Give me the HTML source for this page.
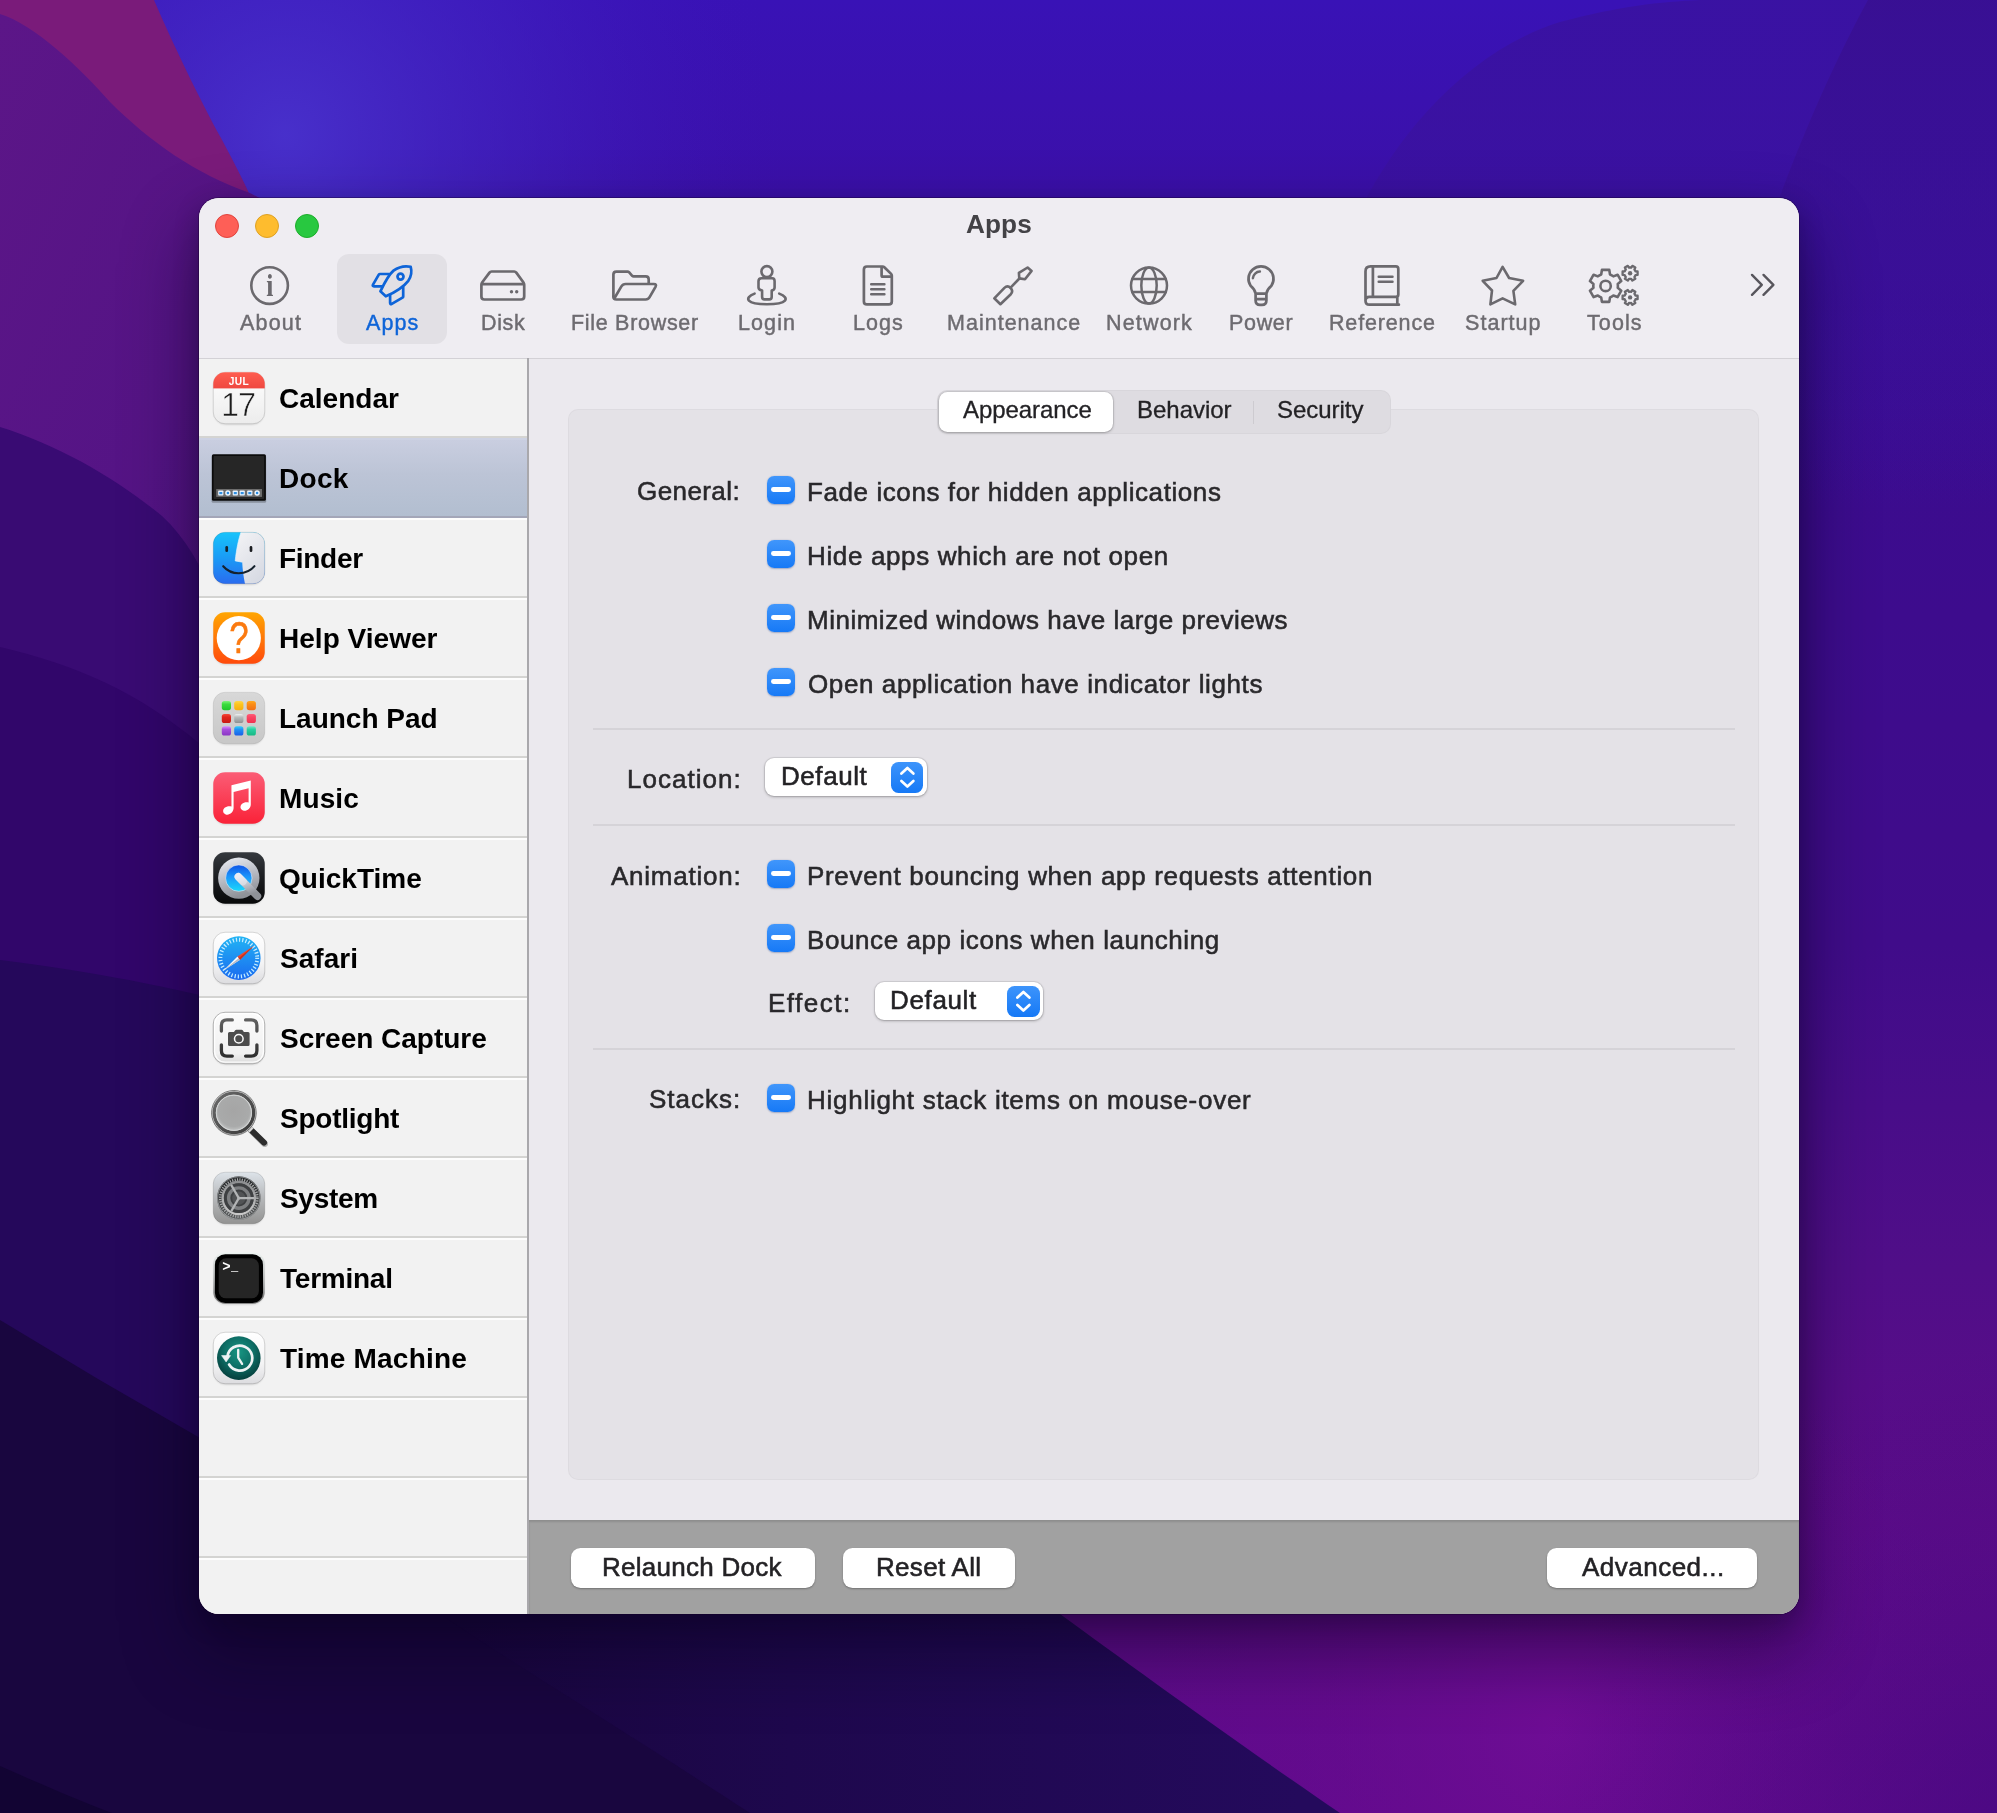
<!DOCTYPE html>
<html lang="en">
<head>
<meta charset="utf-8">
<title>Apps</title>
<style>
html,body{margin:0;padding:0}
body{width:1997px;height:1813px;position:relative;overflow:hidden;background:#2c0a66;font-family:"Liberation Sans",sans-serif;color:#262628}
#wall{position:absolute;left:0;top:0;width:1997px;height:1813px;display:block}
#win{position:absolute;left:199px;top:198px;width:1600px;height:1416px;border-radius:20px;overflow:hidden;background:#ebe9ee;box-shadow:0 0 0 1px rgba(20,0,40,.35),0 36px 70px 6px rgba(8,0,24,.42),0 8px 24px rgba(8,0,24,.25)}
.abs{position:absolute}
.t{position:absolute;white-space:nowrap;line-height:1;will-change:transform}
#tb{left:0;top:0;width:1600px;height:160px;background:#efedf2;border-bottom:1px solid #d3d1d6}
.tl{position:absolute;top:16px;width:24px;height:24px;border-radius:50%;box-sizing:border-box}
#tsel{left:138px;top:56px;width:110px;height:90px;background:#e2e0e5;border-radius:12px}
#side{left:0;top:161px;width:328px;height:1255px;background:#f2f2f2;overflow:hidden}
#sdiv{left:328px;top:160px;width:2px;height:1256px;background:#a9a8ac}
.row{position:absolute;left:0;width:328px;height:76px;border-top:2px solid #fdfdfd;border-bottom:2px solid #d4d4d2}
.row.first{border-top-color:transparent}
.row.sel{background:linear-gradient(#c9cee0,#bcc4d6 45%,#b2bed0);border-top-color:#cdd2e3;border-bottom-color:#a3a6b8}
#box{left:370px;top:212px;width:1189px;height:1069px;background:#e4e2e7;border-radius:9px;box-shadow:0 0 0 1px #dddbe0}
#seg{left:739px;top:192.5px;width:451.6px;height:42.5px;background:#dedce1;border-radius:9px;box-shadow:0 0 0 1px #d8d6db}
#seg .on{position:absolute;left:1px;top:1.5px;width:174px;height:39.5px;background:#fff;border-radius:8.5px;box-shadow:0 0 0 1px rgba(0,0,0,.07),0 1px 3px rgba(0,0,0,.25)}
#seg i{position:absolute;left:314.6px;top:10px;width:1.6px;height:23px;background:#cdcbd0}
.cb{position:absolute;left:567.8px;width:28.3px;height:28px;border-radius:7.2px;background:linear-gradient(#4096fb,#1679f6);box-shadow:0 .5px 1.5px rgba(0,40,120,.3)}

.cb:after{content:"";position:absolute;left:4.3px;top:11.4px;width:19.7px;height:5px;border-radius:2.4px;background:#fff}
.hr{position:absolute;left:394px;width:1142px;height:2px;background:#d5d3d8}
.pop{position:absolute;height:38.6px;background:#fff;border-radius:9px;box-shadow:0 0 0 1px rgba(0,0,0,.07),0 1px 3px rgba(0,0,0,.28)}
.pop em{position:absolute;right:3.6px;top:3.8px;width:32.4px;height:31px;border-radius:7.5px;background:linear-gradient(#3d94fb,#1679f6)}
.pop em svg{position:absolute;left:0;top:0;width:32.4px;height:31px}
#bar{left:330px;top:1322px;width:1270px;height:94px;background:#a1a1a1;box-shadow:inset 0 2px 2px rgba(0,0,0,.12)}
.btn{position:absolute;top:27.8px;height:40px;background:#fff;border-radius:9.5px;box-shadow:0 1px 2px rgba(0,0,0,.3)}

</style>
</head>
<body>
<svg id="wall" viewBox="0 0 1997 1813" width="1997" height="1813">
<defs>
<linearGradient id="gBase" x1="0" y1="0" x2="0" y2="1">
<stop offset="0" stop-color="#3912b6"/><stop offset=".11" stop-color="#3b10a8"/><stop offset=".28" stop-color="#3c0c8e"/><stop offset=".52" stop-color="#400c8a"/><stop offset=".70" stop-color="#500e88"/><stop offset=".84" stop-color="#5d0c89"/><stop offset="1" stop-color="#600a8c"/>
</linearGradient>
<radialGradient id="gBlue" cx="285" cy="135" r="500" gradientUnits="userSpaceOnUse">
<stop offset="0" stop-color="#4a35d0" stop-opacity=".85"/><stop offset=".5" stop-color="#4226c4" stop-opacity=".45"/><stop offset="1" stop-color="#3a12b6" stop-opacity="0"/>
</radialGradient>
<linearGradient id="gPur" x1="0" y1="0" x2="1" y2="1"><stop offset="0" stop-color="#5c1688"/><stop offset="1" stop-color="#4d1282"/></linearGradient>
<linearGradient id="gMid" x1="450" y1="0" x2="1300" y2="0" gradientUnits="userSpaceOnUse"><stop offset="0" stop-color="#19063f"/><stop offset=".4" stop-color="#1e084d"/><stop offset="1" stop-color="#240a5c"/></linearGradient>
<radialGradient id="gMag" cx="1560" cy="1730" r="420" gradientUnits="userSpaceOnUse"><stop offset="0" stop-color="#700d96" stop-opacity=".9"/><stop offset="1" stop-color="#640a8c" stop-opacity="0"/></radialGradient>
<linearGradient id="gShL" x1="0" y1="0" x2="1" y2="0"><stop offset="0" stop-color="#0a0020" stop-opacity="0"/><stop offset="1" stop-color="#0a0020" stop-opacity=".28"/></linearGradient>
<linearGradient id="gRA" x1="0" y1="0" x2="0" y2="520" gradientUnits="userSpaceOnUse"><stop offset="0" stop-color="#3a129c" stop-opacity=".75"/><stop offset=".4" stop-color="#3a129c" stop-opacity=".6"/><stop offset="1" stop-color="#3a0e92" stop-opacity="0"/></linearGradient>
<linearGradient id="gRB" x1="0" y1="0" x2="0" y2="560" gradientUnits="userSpaceOnUse"><stop offset="0" stop-color="#380f90" stop-opacity=".8"/><stop offset=".4" stop-color="#380f90" stop-opacity=".6"/><stop offset="1" stop-color="#3a0c8e" stop-opacity="0"/></linearGradient>
<radialGradient id="gBR" cx="2080" cy="1900" r="560" gradientUnits="userSpaceOnUse"><stop offset="0" stop-color="#36087a" stop-opacity=".6"/><stop offset=".45" stop-color="#36087a" stop-opacity=".3"/><stop offset="1" stop-color="#36087a" stop-opacity="0"/></radialGradient>
</defs>
<rect width="1997" height="1813" fill="url(#gBase)"/>
<rect width="1300" height="420" fill="url(#gBlue)"/>
<path d="M1360,210 C1400,130 1470,50 1560,22 C1620,6 1660,2 1700,0 L1997,0 L1997,700 L1360,700 Z" fill="url(#gRA)"/>
<path d="M1775,210 C1800,140 1835,60 1868,0 L1997,0 L1997,700 L1775,700 Z" fill="url(#gRB)"/>
<path d="M1997,1100 L1997,1813 L1340,1813 C1250,1750 1130,1665 1060,1614 L1000,1570 L1800,1200 Z" fill="url(#gMag)"/>
<rect x="1400" y="1200" width="597" height="613" fill="url(#gBR)"/>
<path d="M0,1400 L1000,1570 L1060,1614 C1130,1665 1250,1752 1340,1813 L0,1813 Z" fill="url(#gMid)"/>
<path d="M0,0 L154,0 C172,42 200,100 221,138 C236,166 246,186 252,200 L300,300 L0,300 Z" fill="#7a1b7a"/>
<path d="M0,14 C34,24 80,68 110,102 C150,142 196,174 250,193 L340,240 L340,760 L0,760 Z" fill="url(#gPur)"/>
<path d="M0,427 C58,445 116,478 162,516 C186,538 202,568 216,600 L340,760 L340,1050 L0,1050 Z" fill="#390b73"/>
<path d="M0,647 C77,665 138,692 200,744 L340,860 L340,1250 L0,1250 Z" fill="#31066a"/>
<path d="M0,960 C96,972 150,984 200,995 L340,1032 L340,1560 L0,1560 Z" fill="#25085b"/>
<path d="M0,1320 L98,1379 L200,1438 L440,1614 C520,1668 610,1722 750,1813 L0,1813 Z" fill="#19063f"/>
<path d="M0,1766 C40,1784 78,1800 112,1813 L0,1813 Z" fill="#120433"/>
</svg>

<div id="win">
<div id="tb" class="abs"></div>
<div class="tl" style="left:16px;background:#fe5f57;border:1px solid #e0443e"></div>
<div class="tl" style="left:56px;background:#febc2e;border:1px solid #dea123"></div>
<div class="tl" style="left:96px;background:#28c840;border:1px solid #1dad2b"></div>
<div id="tsel" class="abs"></div>
<svg class="abs" style="left:0;top:0;will-change:transform" width="1600" height="160" viewBox="199 198 1600 160"><circle cx="269.6" cy="285.6" r="18.3" fill="none" stroke="#6b696e" stroke-width="2.6"/><text transform="translate(269.75,295.55) scale(.8,1)" x="0" y="0" text-anchor="middle" font-family="Liberation Serif, serif" font-weight="bold" font-size="32" fill="#6b696e">i</text><path d="M410.7,266.8 C404.5,265.4 398,267.4 393.5,270.6 C389,274.4 385.4,280.8 380.4,291.3 L385.8,296.3 C398,291 404.5,285.6 408.3,280.8 C411.2,276.4 411.9,271 410.7,266.8 Z" fill="none" stroke="#0e64d8" stroke-width="2.7" stroke-linecap="round" stroke-linejoin="round" /><path d="M389,274 L380,274 Q379.2,274 378.8,274.7 L373,284.6 Q372.2,286.3 374,286.3 L382.4,286.3" fill="none" stroke="#0e64d8" stroke-width="2.7" stroke-linecap="round" stroke-linejoin="round" /><path d="M390.1,295 L390.1,302.8 Q390.1,304.8 391.8,303.8 L402.5,297.6 Q403.2,297.2 403.2,296.4 L403.2,287" fill="none" stroke="#0e64d8" stroke-width="2.7" stroke-linecap="round" stroke-linejoin="round" /><circle cx="400.5" cy="276.6" r="3" fill="none" stroke="#0e64d8" stroke-width="2.7"/><path d="M491.6,271.5 H514.2 Q515.5,271.5 516.3,272.6 L523.5,282.5 Q524.2,283.5 524.2,284.8 V296.5 Q524.2,299.5 521.2,299.5 H484.4 Q481.4,299.5 481.4,296.5 V284.8 Q481.4,283.5 482.1,282.5 L489.5,272.6 Q490.3,271.5 491.6,271.5 Z M481.8,284.1 H523.8" fill="none" stroke="#6b696e" stroke-width="2.7" stroke-linecap="round" stroke-linejoin="round" /><circle cx="511.5" cy="291.8" r="1.7" fill="#6b696e"/><circle cx="516.7" cy="291.8" r="1.7" fill="#6b696e"/><path d="M613.4,296.5 V274.6 Q613.4,271.6 616.4,271.6 H627.6 Q628.4,271.6 629,272.2 L632.2,275.8 Q632.8,276.4 633.6,276.4 H645.7 Q648.7,276.4 648.7,279.4 V283.6" fill="none" stroke="#6b696e" stroke-width="2.7" stroke-linecap="round" stroke-linejoin="round" /><path d="M614.4,298.2 L621.4,286.4 Q622.8,284 625.6,284 H653.8 Q657,284 655.5,286.8 L649.6,297.2 Q648.3,299.5 645.6,299.5 H616.4 Q613.4,299.5 613.4,296.5" fill="none" stroke="#6b696e" stroke-width="2.7" stroke-linecap="round" stroke-linejoin="round" /><circle cx="766.9" cy="271.6" r="5.5" fill="none" stroke="#6b696e" stroke-width="2.6"/><path d="M761.5,278.2 H772.3 Q774.6,278.2 774.6,281.2 V287.4 Q774.6,289.6 771.7,290.6 V297 Q771.7,299.4 769.3,299.4 H764.5 Q762.1,299.4 762.1,297 V290.6 Q758.5,289.6 758.5,287.4 V281.2 Q758.5,278.2 761.5,278.2 Z" fill="none" stroke="#6b696e" stroke-width="2.6" stroke-linecap="round" stroke-linejoin="round" /><path d="M754.6,293.6 C743.5,298 746.5,304.2 766.9,304.2 C787.5,304.2 790.3,298 779.2,293.6" fill="none" stroke="#6b696e" stroke-width="2.6" stroke-linecap="round" stroke-linejoin="round" /><path d="M866.9,266.5 H882.6 Q883.6,266.5 884.3,267.2 L891.1,273.9 Q891.8,274.6 891.8,275.6 V301.4 Q891.8,304.4 888.8,304.4 H866.9 Q863.9,304.4 863.9,301.4 V269.5 Q863.9,266.5 866.9,266.5 Z M881.6,266.8 V275.4 Q881.6,276.6 882.8,276.6 H891.5" fill="none" stroke="#6b696e" stroke-width="2.7" stroke-linecap="round" stroke-linejoin="round" /><path d="M871.2,284.3 H884.4 M871.2,289.3 H884.4 M871.2,294.3 H884.4" fill="none" stroke="#6b696e" stroke-width="2.5" stroke-linecap="round" stroke-linejoin="round" /><path d="M994.3,298.3 L1004.4,287.9 Q1007.6,285 1010.6,288 Q1013.6,291 1010.8,294.2 L1000.4,304.2 Z" fill="none" stroke="#6b696e" stroke-width="2.6" stroke-linecap="round" stroke-linejoin="round" /><path d="M1010.6,287.6 L1019.4,278.5" fill="none" stroke="#6b696e" stroke-width="2.6" stroke-linecap="round" stroke-linejoin="round" /><path d="M1019.3,278.4 L1018.9,272.9 L1027.6,267.5 L1031.6,270.9 L1025,279.2 Z" fill="none" stroke="#6b696e" stroke-width="2.6" stroke-linecap="round" stroke-linejoin="round" /><circle cx="1149" cy="285.6" r="18" fill="none" stroke="#6b696e" stroke-width="2.5"/><ellipse cx="1149" cy="285.6" rx="7.7" ry="18" fill="none" stroke="#6b696e" stroke-width="2.5"/><path d="M1132.3,279 H1165.7 M1132.2,292 H1165.8" fill="none" stroke="#6b696e" stroke-width="2.5" stroke-linecap="round" stroke-linejoin="round" /><path d="M1255.6,293.6 C1255,289.6 1252,287 1250.6,285.8 A12.5,12.5 0 1 1 1271.4,285.8 C1270,287 1267,289.6 1266.4,293.6 Z M1255.6,293.6 V300.5 Q1255.6,304.9 1260,304.9 H1262 Q1266.4,304.9 1266.4,300.5 V293.6 M1255.8,299.1 H1266.2" fill="none" stroke="#6b696e" stroke-width="2.7" stroke-linecap="round" stroke-linejoin="round" /><path d="M1252.9,278.2 A7.2,7.2 0 0 1 1259.9,271.6" fill="none" stroke="#6b696e" stroke-width="2.5" stroke-linecap="round" stroke-linejoin="round" /><path d="M1365.5,300.8 V271.4 Q1365.5,266.4 1370.5,266.4 H1395.8 Q1398.3,266.4 1398.3,268.9 V294.4 Q1398.3,296.9 1395.8,296.9 H1369.4 Q1365.5,296.9 1365.5,300.8 Q1365.5,304.7 1369.4,304.7 H1398.9 M1397.3,297.2 V304.4 M1372.9,266.8 V296.6" fill="none" stroke="#6b696e" stroke-width="2.7" stroke-linecap="round" stroke-linejoin="round" /><path d="M1378.7,276.8 H1392.5 M1378.7,281.7 H1392.5" fill="none" stroke="#6b696e" stroke-width="2.5" stroke-linecap="round" stroke-linejoin="round" /><path d="M1502.6,266.8 L1509.1,278 L1523.1,280.8 L1513.4,290.8 L1515.2,304.4 L1502.6,298.3 L1490.4,304.4 L1492,290.5 L1482.7,280.8 L1496.5,278 Z" fill="none" stroke="#6b696e" stroke-width="2.6" stroke-linecap="round" stroke-linejoin="round" /><path d="M1610.01,274.42 L1609.29,269.92 L1601.91,269.92 L1601.19,274.42 A12.3,12.3 0 0 0 1597.86,276.34 L1593.61,274.72 L1589.92,281.11 L1593.45,283.98 A12.3,12.3 0 0 0 1593.45,287.82 L1589.92,290.69 L1593.61,297.08 L1597.86,295.46 A12.3,12.3 0 0 0 1601.19,297.38 L1601.91,301.88 L1609.29,301.88 L1610.01,297.38 A12.3,12.3 0 0 0 1613.34,295.46 L1617.59,297.08 L1621.28,290.69 L1617.75,287.82 A12.3,12.3 0 0 0 1617.75,283.98 L1621.28,281.11 L1617.59,274.72 L1613.34,276.34 A12.3,12.3 0 0 0 1610.01,274.42 Z" fill="none" stroke="#6b696e" stroke-width="2.6" stroke-linecap="round" stroke-linejoin="round" /><circle cx="1605.6" cy="285.9" r="5.2" fill="none" stroke="#6b696e" stroke-width="2.6"/><path d="M1634.40,269.46 L1635.35,267.57 L1632.35,265.84 L1631.19,267.60 A5.7,5.7 0 0 0 1629.01,267.60 L1627.85,265.84 L1624.85,267.57 L1625.80,269.46 A5.7,5.7 0 0 0 1624.71,271.34 L1622.60,271.47 L1622.60,274.93 L1624.71,275.06 A5.7,5.7 0 0 0 1625.80,276.94 L1624.85,278.83 L1627.85,280.56 L1629.01,278.80 A5.7,5.7 0 0 0 1631.19,278.80 L1632.35,280.56 L1635.35,278.83 L1634.40,276.94 A5.7,5.7 0 0 0 1635.49,275.06 L1637.60,274.93 L1637.60,271.47 L1635.49,271.34 A5.7,5.7 0 0 0 1634.40,269.46 Z" fill="none" stroke="#6b696e" stroke-width="2.3" stroke-linecap="round" stroke-linejoin="round" /><path d="M1634.40,293.66 L1635.35,291.77 L1632.35,290.04 L1631.19,291.80 A5.7,5.7 0 0 0 1629.01,291.80 L1627.85,290.04 L1624.85,291.77 L1625.80,293.66 A5.7,5.7 0 0 0 1624.71,295.54 L1622.60,295.67 L1622.60,299.13 L1624.71,299.26 A5.7,5.7 0 0 0 1625.80,301.14 L1624.85,303.03 L1627.85,304.76 L1629.01,303.00 A5.7,5.7 0 0 0 1631.19,303.00 L1632.35,304.76 L1635.35,303.03 L1634.40,301.14 A5.7,5.7 0 0 0 1635.49,299.26 L1637.60,299.13 L1637.60,295.67 L1635.49,295.54 A5.7,5.7 0 0 0 1634.40,293.66 Z" fill="none" stroke="#6b696e" stroke-width="2.3" stroke-linecap="round" stroke-linejoin="round" /><circle cx="1630.1" cy="273.2" r="2.2" fill="#6b696e"/><circle cx="1630.1" cy="297.4" r="2.2" fill="#6b696e"/><path d="M1752,274.9 L1761.8,284.85 L1752,294.8 M1763.5,274.9 L1773.4,284.85 L1763.5,294.8" fill="none" stroke="#57555c" stroke-width="2.4" stroke-linecap="round" stroke-linejoin="round" /></svg>
<div id="side" class="abs">
<div class="row first" style="top:-1px"></div>
<div class="row sel" style="top:79px"></div>
<div class="row" style="top:159px"></div>
<div class="row" style="top:239px"></div>
<div class="row" style="top:319px"></div>
<div class="row" style="top:399px"></div>
<div class="row" style="top:479px"></div>
<div class="row" style="top:559px"></div>
<div class="row" style="top:639px"></div>
<div class="row" style="top:719px"></div>
<div class="row" style="top:799px"></div>
<div class="row" style="top:879px"></div>
<div class="row" style="top:959px"></div>
<div class="row" style="top:1039px"></div>
<div class="row" style="top:1119px"></div>
<div class="row" style="top:1199px"></div>
</div>
<div id="sdiv" class="abs"></div>
<svg class="abs" style="left:0;top:160px;will-change:transform" width="330" height="1256" viewBox="199 358 330 1256"><defs>
<filter id="ib" x="-20%" y="-20%" width="140%" height="140%"><feGaussianBlur stdDeviation="1"/></filter>
<filter id="ib2" x="-20%" y="-20%" width="140%" height="140%"><feGaussianBlur stdDeviation=".45"/></filter>
<linearGradient id="calR" x1="0" y1="0" x2="0" y2="1"><stop offset="0" stop-color="#ff5e50"/><stop offset="1" stop-color="#ef4840"/></linearGradient>
<linearGradient id="calW" x1="0" y1="0" x2="0" y2="1"><stop offset="0" stop-color="#ffffff"/><stop offset="1" stop-color="#ececec"/></linearGradient>
<clipPath id="sqc"><rect x=".25" y=".25" width="51.5" height="51.5" rx="11.8"/></clipPath>
<linearGradient id="finB" x1="0" y1="0" x2="0" y2="1"><stop offset="0" stop-color="#17c4fb"/><stop offset=".5" stop-color="#1a9bf6"/><stop offset="1" stop-color="#2a6bee"/></linearGradient>
<linearGradient id="finW" x1="0" y1="0" x2=".6" y2="1"><stop offset="0" stop-color="#f4f4f6"/><stop offset="1" stop-color="#d8dbe4"/></linearGradient>
<linearGradient id="helpO" x1="0" y1="0" x2="0" y2="1"><stop offset="0" stop-color="#ffa602"/><stop offset="1" stop-color="#ff4a0c"/></linearGradient>
<linearGradient id="lpG" x1="0" y1="0" x2="0" y2="1"><stop offset="0" stop-color="#d8d8d8"/><stop offset="1" stop-color="#c7c7c7"/></linearGradient>
<linearGradient id="musR" x1="0" y1="0" x2="0" y2="1"><stop offset="0" stop-color="#fb5d76"/><stop offset="1" stop-color="#fa2238"/></linearGradient>
<linearGradient id="qtK" x1="0" y1="0" x2="0" y2="1"><stop offset="0" stop-color="#35393e"/><stop offset=".5" stop-color="#1b1d20"/><stop offset="1" stop-color="#08090a"/></linearGradient>
<linearGradient id="qtS" x1="0" y1="0" x2=".3" y2="1"><stop offset="0" stop-color="#eef1f7"/><stop offset=".55" stop-color="#b9bcc4"/><stop offset="1" stop-color="#8f9298"/></linearGradient>
<linearGradient id="qtB" x1="0" y1="0" x2="0" y2="1"><stop offset="0" stop-color="#0f55e6"/><stop offset=".45" stop-color="#1b96fb"/><stop offset="1" stop-color="#1ad9fa"/></linearGradient>
<linearGradient id="safW" x1="0" y1="0" x2="0" y2="1"><stop offset="0" stop-color="#ffffff"/><stop offset=".6" stop-color="#f4f4f5"/><stop offset="1" stop-color="#dcdcdf"/></linearGradient>
<linearGradient id="safB" x1="0" y1="0" x2="0" y2="1"><stop offset="0" stop-color="#22b4f4"/><stop offset="1" stop-color="#1a6af0"/></linearGradient>
<linearGradient id="scW" x1="0" y1="0" x2="0" y2="1"><stop offset="0" stop-color="#fbfbfb"/><stop offset=".8" stop-color="#f1f1f1"/><stop offset="1" stop-color="#d9d9d9"/></linearGradient>
<linearGradient id="scK" x1="0" y1="0" x2="0" y2="1"><stop offset="0" stop-color="#606060"/><stop offset="1" stop-color="#2e2e2e"/></linearGradient>
<linearGradient id="sysG" x1="0" y1="0" x2="0" y2="1"><stop offset="0" stop-color="#dde3e9"/><stop offset=".5" stop-color="#b6b8ba"/><stop offset="1" stop-color="#939392"/></linearGradient>
<linearGradient id="sysD" x1="0" y1="0" x2="0" y2="1"><stop offset="0" stop-color="#1e2022"/><stop offset="1" stop-color="#5a5c5d"/></linearGradient>
<linearGradient id="sysM" x1="0" y1="0" x2="0" y2="1"><stop offset="0" stop-color="#8d8f91"/><stop offset="1" stop-color="#c9c9c9"/></linearGradient>
<linearGradient id="termR" x1="0" y1="0" x2="0" y2="1"><stop offset="0" stop-color="#eef4f2"/><stop offset=".5" stop-color="#b5b7b7"/><stop offset="1" stop-color="#6f6f6f"/></linearGradient>
<radialGradient id="tmT" cx=".5" cy=".36" r=".62"><stop offset="0" stop-color="#179582"/><stop offset=".55" stop-color="#0e6f66"/><stop offset="1" stop-color="#06423f"/></radialGradient>
<radialGradient id="spG" cx=".5" cy=".45" r=".55"><stop offset="0" stop-color="#a5a5a5"/><stop offset=".8" stop-color="#a9aaaa"/><stop offset="1" stop-color="#bfc1c1"/></radialGradient>
<linearGradient id="spR" x1="0" y1="0" x2="1" y2="1"><stop offset="0" stop-color="#6a6a6a"/><stop offset="1" stop-color="#3a3a3a"/></linearGradient>
</defs><g transform="translate(213,372)"><rect x="1" y="2.2" width="50" height="50.4" rx="12" fill="#000" opacity=".16" filter="url(#ib)"/><rect x="0.25" y="0.25" width="51.5" height="51.5" rx="11.8" fill="url(#calW)" stroke="#000" stroke-opacity=".22" stroke-width=".6"/><g clip-path="url(#sqc)"><rect x="0" y="0" width="52" height="16.4" fill="url(#calR)"/></g><text x="25.9" y="12.55" text-anchor="middle" font-family="Liberation Sans, sans-serif" font-weight="bold" font-size="10.2" fill="#fff" letter-spacing=".3">JUL</text><text x="24.9" y="43.5" text-anchor="middle" font-family="Liberation Sans, sans-serif" font-size="32.6" fill="#1c1c1c" stroke="#fafafa" stroke-width=".6" letter-spacing="-1.3">17</text></g><g transform="translate(213,452)"><rect x="-1.4" y="3.4" width="54.6" height="47.4" rx="1.6" fill="#000" opacity=".25" filter="url(#ib2)"/><rect x="-1.1" y="2.2" width="54" height="46.6" rx="1.6" fill="#0b0b0b"/><rect x="0.6" y="4" width="50.6" height="43" rx=".8" fill="#262626"/><rect x="3.2" y="37" width="45.8" height="7.9" fill="#6d6d6d"/><rect x="5.199999999999999" y="38.5" width="5.2" height="5" rx=".8" fill="#e6f3ff"/><rect x="6.3" y="40" width="3" height="2.2" fill="#2f8fe2"/><circle cx="14.9" cy="41" r="2.7" fill="#eaf6ff"/><circle cx="14.9" cy="41" r="1.3" fill="#2a8ae0"/><rect x="19.7" y="38.5" width="5.2" height="5" rx=".8" fill="#e6f3ff"/><rect x="20.8" y="40" width="3" height="2.2" fill="#2f8fe2"/><rect x="26.599999999999998" y="38.5" width="5.2" height="5" rx=".8" fill="#e6f3ff"/><rect x="27.7" y="40" width="3" height="2.2" fill="#2f8fe2"/><rect x="34.199999999999996" y="38.5" width="5.2" height="5" rx=".8" fill="#e6f3ff"/><rect x="35.3" y="40" width="3" height="2.2" fill="#2f8fe2"/><circle cx="44.1" cy="41" r="2.7" fill="#eaf6ff"/><circle cx="44.1" cy="41" r="1.3" fill="#2a8ae0"/></g><g transform="translate(213,532)"><rect x="1" y="2.2" width="50" height="50.4" rx="12" fill="#000" opacity=".16" filter="url(#ib)"/><g clip-path="url(#sqc)"><rect width="52" height="52" fill="url(#finB)"/><path d="M28,0 C25.6,7 23.4,17 22.2,28.9 L29.2,30.2 C29.6,38 30.6,45 32,52 L52,52 L52,0 Z" fill="url(#finW)"/><path d="M28,0 C25.6,7 23.4,17 22.2,28.9 L29.2,30.2" fill="none" stroke="#dff6ff" stroke-width=".7" opacity=".9"/></g><rect x="12.35" y="14.1" width="2.7" height="5.9" rx="1.3" fill="#16222e"/><rect x="36.65" y="14.1" width="2.7" height="5.9" rx="1.3" fill="#1a1c20"/><path d="M10.2,34.2 C14.5,39.2 19.8,41.2 25.7,41.2 C31.8,41.2 37.4,39.2 41.5,34.2" fill="none" stroke="#15222e" stroke-width="2.1" stroke-linecap="round"/><rect x="0.25" y="0.25" width="51.5" height="51.5" rx="11.8" fill="none" stroke="#000" stroke-opacity=".18" stroke-width=".6"/></g><g transform="translate(213,612)"><rect x="1" y="2.2" width="50" height="50.4" rx="12" fill="#000" opacity=".16" filter="url(#ib)"/><rect x="0.25" y="0.25" width="51.5" height="51.5" rx="11.8" fill="url(#helpO)" /><circle cx="25.8" cy="26.1" r="22.1" fill="#fff"/><text transform="translate(26,41.4) scale(.85,1.06)" x="0" y="0" text-anchor="middle" font-family="Liberation Sans, sans-serif" font-size="41" fill="#fb7a10" stroke="#fb7a10" stroke-width=".5">?</text></g><g transform="translate(213,692)"><rect x="1" y="2.2" width="50" height="50.4" rx="12" fill="#000" opacity=".16" filter="url(#ib)"/><defs><linearGradient id="lp00" x1="0" y1="0" x2="0" y2="1"><stop offset="0" stop-color="#7df37a"/><stop offset=".35" stop-color="#3bdc3e"/><stop offset="1" stop-color="#1fc62a"/></linearGradient><linearGradient id="lp01" x1="0" y1="0" x2="0" y2="1"><stop offset="0" stop-color="#ffd64a"/><stop offset=".35" stop-color="#fdc51f"/><stop offset="1" stop-color="#f6ae10"/></linearGradient><linearGradient id="lp02" x1="0" y1="0" x2="0" y2="1"><stop offset="0" stop-color="#ffaa20"/><stop offset=".35" stop-color="#fb8d15"/><stop offset="1" stop-color="#f07018"/></linearGradient><linearGradient id="lp10" x1="0" y1="0" x2="0" y2="1"><stop offset="0" stop-color="#f54a3a"/><stop offset=".35" stop-color="#e2241c"/><stop offset="1" stop-color="#c71a14"/></linearGradient><linearGradient id="lp11" x1="0" y1="0" x2="0" y2="1"><stop offset="0" stop-color="#f2f4f4"/><stop offset=".35" stop-color="#b9bcbd"/><stop offset="1" stop-color="#8c9091"/></linearGradient><linearGradient id="lp12" x1="0" y1="0" x2="0" y2="1"><stop offset="0" stop-color="#ff5f7a"/><stop offset=".35" stop-color="#fb4563"/><stop offset="1" stop-color="#f03050"/></linearGradient><linearGradient id="lp20" x1="0" y1="0" x2="0" y2="1"><stop offset="0" stop-color="#d68cff"/><stop offset=".35" stop-color="#a74edc"/><stop offset="1" stop-color="#8a36c4"/></linearGradient><linearGradient id="lp21" x1="0" y1="0" x2="0" y2="1"><stop offset="0" stop-color="#30d0fb"/><stop offset=".35" stop-color="#1f90f5"/><stop offset="1" stop-color="#1a5fe8"/></linearGradient><linearGradient id="lp22" x1="0" y1="0" x2="0" y2="1"><stop offset="0" stop-color="#6fe8c8"/><stop offset=".35" stop-color="#28d0a0"/><stop offset="1" stop-color="#18b884"/></linearGradient></defs><rect x="0.25" y="0.25" width="51.5" height="51.5" rx="11.8" fill="url(#lpG)" stroke="#000" stroke-opacity=".12" stroke-width=".6"/><rect x="8.8" y="9.0" width="9.2" height="9.2" rx="2.6" fill="url(#lp00)"/><rect x="21.200000000000003" y="9.0" width="9.2" height="9.2" rx="2.6" fill="url(#lp01)"/><rect x="33.699999999999996" y="9.0" width="9.2" height="9.2" rx="2.6" fill="url(#lp02)"/><rect x="8.8" y="21.9" width="9.2" height="9.2" rx="2.6" fill="url(#lp10)"/><rect x="21.200000000000003" y="21.9" width="9.2" height="9.2" rx="2.6" fill="url(#lp11)"/><rect x="33.699999999999996" y="21.9" width="9.2" height="9.2" rx="2.6" fill="url(#lp12)"/><rect x="8.8" y="34.3" width="9.2" height="9.2" rx="2.6" fill="url(#lp20)"/><rect x="21.200000000000003" y="34.3" width="9.2" height="9.2" rx="2.6" fill="url(#lp21)"/><rect x="33.699999999999996" y="34.3" width="9.2" height="9.2" rx="2.6" fill="url(#lp22)"/></g><g transform="translate(213,772)"><rect x="1" y="2.2" width="50" height="50.4" rx="12" fill="#000" opacity=".16" filter="url(#ib)"/><rect x="0.25" y="0.25" width="51.5" height="51.5" rx="11.8" fill="url(#musR)" /><path d="M18.45,13.2 L37.8,8.5 V32.4 C37.8,36.6 33.5,39.6 30.1,38.5 C27.2,37.5 26.6,34.2 28.9,32 C30.7,30.3 33.4,30.1 35.6,30.6 V16.3 L20.6,19.9 V36.1 C20.6,40.4 16.2,43.6 12.7,42.4 C9.8,41.4 9.3,38 11.6,35.8 C13.4,34.1 16.2,33.9 18.45,34.4 Z" fill="#fff"/></g><g transform="translate(213,852)"><rect x="1" y="2.2" width="50" height="50.4" rx="12" fill="#000" opacity=".16" filter="url(#ib)"/><rect x="0.25" y="0.25" width="51.5" height="51.5" rx="11.8" fill="url(#qtK)" /><circle cx="25.8" cy="26.1" r="20.7" fill="url(#qtS)"/><circle cx="25.8" cy="26.1" r="13.2" fill="url(#qtB)"/><circle cx="25.8" cy="26.1" r="13.2" fill="none" stroke="#dfe8f5" stroke-width=".8" opacity=".8"/><path d="M25.4,24.8 L44.4,44.2" stroke="url(#qtS)" stroke-width="7.6" stroke-linecap="round" fill="none"/><path d="M25.4,24.8 L30,29.5" stroke="#e8eaf0" stroke-width="7.6" stroke-linecap="round" fill="none" opacity=".55"/></g><g transform="translate(213,932)"><rect x="1" y="2.2" width="50" height="50.4" rx="12" fill="#000" opacity=".16" filter="url(#ib)"/><rect x="0.25" y="0.25" width="51.5" height="51.5" rx="11.8" fill="url(#safW)" stroke="#000" stroke-opacity=".25" stroke-width=".6"/><circle cx="25.8" cy="26.1" r="21.8" fill="url(#safB)"/><circle cx="25.8" cy="26.1" r="18.4" fill="none" stroke="#c4ecff" stroke-width="3.9" stroke-dasharray="1.25 1.9615" transform="rotate(-1 25.8 26.1)"/><path d="M10.5,38.4 L27.12,27.74 L24.48,24.46 Z" fill="#fdfdfd"/><path d="M10.5,38.4 L27.12,27.74 L25.8,26.1 Z" fill="#b9bcc6"/><path d="M40.7,14.1 L27.12,27.74 L24.48,24.46 Z" fill="#f0482e"/><path d="M40.7,14.1 L27.12,27.74 L25.8,26.1 Z" fill="#c8341e"/></g><g transform="translate(213,1012)"><rect x="1" y="2.2" width="50" height="50.4" rx="12" fill="#000" opacity=".16" filter="url(#ib)"/><rect x="0.25" y="0.25" width="51.5" height="51.5" rx="11.8" fill="url(#scW)" stroke="#a8a8a8" stroke-width=".9"/><rect x="1.6" y="1.6" width="48.8" height="48.6" rx="10.6" fill="none" stroke="#fff" stroke-width="1.2" opacity=".9"/><path d="M8.4,19 V13.4 Q8.4,7.9 13.9,7.9 H19.3 M32.6,7.9 H38.2 Q43.9,7.9 43.9,13.4 V19 M43.9,32.8 V38.5 Q43.9,44.1 38.2,44.1 H32.6 M19.3,44.1 H13.9 Q8.4,44.1 8.4,38.5 V32.8" fill="none" stroke="url(#scK)" stroke-width="3.3" stroke-linecap="round" stroke-linejoin="round"/><path d="M16.5,19.9 H21 L22.2,18.2 Q22.6,17.7 23.3,17.7 H28.6 Q29.3,17.7 29.7,18.2 L30.9,19.9 H35.1 Q36.6,19.9 36.6,21.4 V32.5 Q36.6,34 35.1,34 H16.5 Q15,34 15,32.5 V21.4 Q15,19.9 16.5,19.9 Z" fill="#4c4c4c"/><circle cx="25.8" cy="26.7" r="4.3" fill="#4c4c4c" stroke="#fafafa" stroke-width="1.5"/></g><g transform="translate(213,1092)"><path d="M37.6,37.5 L51.2,50.8" stroke="#000" stroke-opacity=".25" stroke-width="6.6" stroke-linecap="round" filter="url(#ib2)" transform="translate(.6,1)"/><path d="M36.4,36.3 L51,50.6" stroke="#2d2d2d" stroke-width="6" stroke-linecap="round"/><path d="M36.4,36.3 L38.6,38.4" stroke="#d9d9d9" stroke-width="6" stroke-linecap="butt"/><circle cx="20.9" cy="21.6" r="22.4" fill="#000" opacity=".22" filter="url(#ib2)"/><circle cx="20.9" cy="20.8" r="22.3" fill="#dcdcdc" stroke="#6b6b6b" stroke-width=".9"/><circle cx="20.9" cy="20.8" r="19.7" fill="none" stroke="url(#spR)" stroke-width="3.3"/><circle cx="20.9" cy="20.8" r="17.6" fill="url(#spG)" stroke="#d4d6d6" stroke-width=".9"/></g><g transform="translate(213,1172)"><rect x="1" y="2.2" width="50" height="50.4" rx="12" fill="#000" opacity=".16" filter="url(#ib)"/><rect x="0.25" y="0.25" width="51.5" height="51.5" rx="11.8" fill="url(#sysG)" stroke="#000" stroke-opacity=".2" stroke-width=".6"/><circle cx="25.8" cy="26.1" r="21.8" fill="url(#sysD)"/><circle cx="25.8" cy="26.1" r="21.2" fill="none" stroke="#cfd2d4" stroke-width=".7" opacity=".8"/><circle cx="25.8" cy="26.1" r="17.6" fill="#555759"/><circle cx="25.8" cy="26.1" r="18.6" fill="none" stroke="#a9abac" stroke-width="2.6" stroke-dasharray="1.15 1.285"/><circle cx="25.8" cy="26.1" r="16.1" fill="none" stroke="url(#sysM)" stroke-width="2.3"/><circle cx="25.8" cy="26.1" r="14.9" fill="#3e4042"/><circle cx="25.8" cy="26.1" r="10.2" fill="none" stroke="#7d7f81" stroke-width="3.4"/><circle cx="25.8" cy="26.1" r="6.6" fill="#515355"/><path d="M25.8,26.1 L41.10,26.10 M25.8,26.1 L18.15,12.85 M25.8,26.1 L18.15,39.35 " stroke="#b3b5b6" stroke-width="2.2" stroke-linecap="butt" fill="none"/><circle cx="25.8" cy="26.1" r="1.6" fill="#b3b5b6"/></g><g transform="translate(213,1252)"><rect x="1" y="2.2" width="50" height="50.4" rx="12" fill="#000" opacity=".16" filter="url(#ib)"/><rect x="0.25" y="0.25" width="51.5" height="51.5" rx="11.8" fill="url(#termR)" /><rect x="1.9" y="2.3" width="48.1" height="48.8" rx="10.4" fill="#000"/><rect x="5.7" y="6.3" width="40.2" height="40" rx="7.4" fill="#252525"/><text x="9.2" y="18.9" font-family="Liberation Mono, monospace" font-weight="bold" font-size="14" fill="#fff">&gt;</text><text x="18" y="17.6" font-family="Liberation Mono, monospace" font-weight="bold" font-size="15" fill="#fff" textLength="7.2" lengthAdjust="spacingAndGlyphs">_</text></g><g transform="translate(213,1332)"><rect x="1" y="2.2" width="50" height="50.4" rx="12" fill="#000" opacity=".16" filter="url(#ib)"/><rect x="0.25" y="0.25" width="51.5" height="51.5" rx="11.8" fill="url(#safW)" stroke="#000" stroke-opacity=".25" stroke-width=".6"/><circle cx="25.8" cy="26.1" r="21.8" fill="url(#tmT)"/><path d="M14.37,24.79 A12.5,12.5 0 1 1 16.09,32.54" fill="none" stroke="#eef3f4" stroke-width="2.7" stroke-linecap="round"/><path d="M8.6,23.6 L17.6,23.6 L13.1,29.9 Z" fill="#eef3f4" stroke="#eef3f4" stroke-width=".6" stroke-linejoin="round"/><path d="M25.2,17.8 V25.6 L29.1,31.9" fill="none" stroke="#eef3f4" stroke-width="2.3" stroke-linecap="round" stroke-linejoin="round"/></g></svg>
<div id="box" class="abs"></div>
<div id="seg" class="abs"><div class="on"></div><i></i></div>
<div class="cb" style="top:278px"></div>
<div class="cb" style="top:342px"></div>
<div class="cb" style="top:406px"></div>
<div class="cb" style="top:470px"></div>
<div class="cb" style="top:661.8px"></div>
<div class="cb" style="top:725.8px"></div>
<div class="cb" style="top:886px"></div>
<div class="hr" style="top:530px"></div>
<div class="hr" style="top:626px"></div>
<div class="hr" style="top:850px"></div>
<div class="pop" style="left:565.6px;top:559.8px;width:162px"><em><svg viewBox="0 0 32 31"><path d="M10.2 11.5 L16.2 6 L22.2 11.5 M10.2 19 L16.2 24.5 L22.2 19" fill="none" stroke="#fff" stroke-width="2.7" stroke-linecap="round" stroke-linejoin="round"/></svg></em></div>
<div class="pop" style="left:675.6px;top:783.8px;width:168.6px"><em><svg viewBox="0 0 32 31"><path d="M10.2 11.5 L16.2 6 L22.2 11.5 M10.2 19 L16.2 24.5 L22.2 19" fill="none" stroke="#fff" stroke-width="2.7" stroke-linecap="round" stroke-linejoin="round"/></svg></em></div>
<div id="bar" class="abs"><div class="btn" style="left:41.6px;width:244.8px"></div><div class="btn" style="left:314px;width:172.4px"></div><div class="btn" style="left:1018px;width:210.2px"></div></div>
<span class="t" style="left:766.80px;top:13.22px;font-size:26.2px;letter-spacing:0.098px;color:#434246;font-weight:bold">Apps</span>
<span class="t" style="left:41.00px;top:114.50px;font-size:21.5px;letter-spacing:1.197px;color:#6d6b70;-webkit-text-stroke:0.45px #6d6b70">About</span>
<span class="t" style="left:167.00px;top:114.50px;font-size:21.5px;letter-spacing:1.115px;color:#0e64d8;-webkit-text-stroke:0.45px #0e64d8">Apps</span>
<span class="t" style="left:281.50px;top:114.50px;font-size:21.5px;letter-spacing:0.649px;color:#6d6b70;-webkit-text-stroke:0.45px #6d6b70">Disk</span>
<span class="t" style="left:372.00px;top:114.50px;font-size:21.5px;letter-spacing:0.699px;color:#6d6b70;-webkit-text-stroke:0.45px #6d6b70">File Browser</span>
<span class="t" style="left:539.00px;top:114.50px;font-size:21.5px;letter-spacing:1.088px;color:#6d6b70;-webkit-text-stroke:0.45px #6d6b70">Login</span>
<span class="t" style="left:654.00px;top:114.50px;font-size:21.5px;letter-spacing:1.043px;color:#6d6b70;-webkit-text-stroke:0.45px #6d6b70">Logs</span>
<span class="t" style="left:747.50px;top:114.50px;font-size:21.5px;letter-spacing:1.015px;color:#6d6b70;-webkit-text-stroke:0.45px #6d6b70">Maintenance</span>
<span class="t" style="left:906.60px;top:114.50px;font-size:21.5px;letter-spacing:1.167px;color:#6d6b70;-webkit-text-stroke:0.45px #6d6b70">Network</span>
<span class="t" style="left:1030.00px;top:114.50px;font-size:21.5px;letter-spacing:0.680px;color:#6d6b70;-webkit-text-stroke:0.45px #6d6b70">Power</span>
<span class="t" style="left:1130.00px;top:114.50px;font-size:21.5px;letter-spacing:0.845px;color:#6d6b70;-webkit-text-stroke:0.45px #6d6b70">Reference</span>
<span class="t" style="left:1266.00px;top:114.50px;font-size:21.5px;letter-spacing:1.040px;color:#6d6b70;-webkit-text-stroke:0.45px #6d6b70">Startup</span>
<span class="t" style="left:1388.00px;top:114.50px;font-size:21.5px;letter-spacing:1.090px;color:#6d6b70;-webkit-text-stroke:0.45px #6d6b70">Tools</span>
<span class="t" style="left:79.80px;top:187.20px;font-size:28px;letter-spacing:0.011px;color:#000;font-weight:bold">Calendar</span>
<span class="t" style="left:79.80px;top:267.20px;font-size:28px;letter-spacing:0.301px;color:#000;font-weight:bold">Dock</span>
<span class="t" style="left:79.80px;top:347.20px;font-size:28px;letter-spacing:-0.292px;color:#000;font-weight:bold">Finder</span>
<span class="t" style="left:79.80px;top:427.20px;font-size:28px;letter-spacing:0.027px;color:#000;font-weight:bold">Help Viewer</span>
<span class="t" style="left:79.80px;top:507.20px;font-size:28px;letter-spacing:-0.010px;color:#000;font-weight:bold">Launch Pad</span>
<span class="t" style="left:79.80px;top:587.20px;font-size:28px;letter-spacing:0.105px;color:#000;font-weight:bold">Music</span>
<span class="t" style="left:79.80px;top:667.20px;font-size:28px;letter-spacing:0.015px;color:#000;font-weight:bold">QuickTime</span>
<span class="t" style="left:80.80px;top:747.20px;font-size:28px;letter-spacing:0.032px;color:#000;font-weight:bold">Safari</span>
<span class="t" style="left:80.80px;top:827.20px;font-size:28px;letter-spacing:-0.015px;color:#000;font-weight:bold">Screen Capture</span>
<span class="t" style="left:80.80px;top:907.20px;font-size:28px;letter-spacing:-0.247px;color:#000;font-weight:bold">Spotlight</span>
<span class="t" style="left:80.80px;top:987.20px;font-size:28px;letter-spacing:-0.303px;color:#000;font-weight:bold">System</span>
<span class="t" style="left:80.80px;top:1067.20px;font-size:28px;letter-spacing:-0.235px;color:#000;font-weight:bold">Terminal</span>
<span class="t" style="left:80.80px;top:1147.20px;font-size:28px;letter-spacing:0.193px;color:#000;font-weight:bold">Time Machine</span>
<span class="t" style="left:764.10px;top:200.28px;font-size:24px;letter-spacing:-0.065px;color:#232225;-webkit-text-stroke:0.3px #232225">Appearance</span>
<span class="t" style="left:937.60px;top:200.28px;font-size:24px;letter-spacing:-0.019px;color:#232225;-webkit-text-stroke:0.3px #232225">Behavior</span>
<span class="t" style="left:1077.60px;top:200.28px;font-size:24px;letter-spacing:-0.042px;color:#232225;-webkit-text-stroke:0.3px #232225">Security</span>
<span class="t" style="left:438.00px;top:280.29px;font-size:26px;letter-spacing:0.415px;color:#29282b;-webkit-text-stroke:0.55px #29282b">General:</span>
<span class="t" style="left:427.80px;top:568.19px;font-size:26px;letter-spacing:1.025px;color:#29282b;-webkit-text-stroke:0.55px #29282b">Location:</span>
<span class="t" style="left:411.80px;top:664.59px;font-size:26px;letter-spacing:0.765px;color:#29282b;-webkit-text-stroke:0.55px #29282b">Animation:</span>
<span class="t" style="left:450.40px;top:888.19px;font-size:26px;letter-spacing:0.979px;color:#29282b;-webkit-text-stroke:0.55px #29282b">Stacks:</span>
<span class="t" style="left:569.30px;top:791.99px;font-size:26px;letter-spacing:1.500px;color:#29282b;-webkit-text-stroke:0.55px #29282b">Effect:</span>
<span class="t" style="left:607.60px;top:280.79px;font-size:26px;letter-spacing:0.585px;color:#29282b;-webkit-text-stroke:0.55px #29282b">Fade icons for hidden applications</span>
<span class="t" style="left:607.60px;top:344.79px;font-size:26px;letter-spacing:0.639px;color:#29282b;-webkit-text-stroke:0.55px #29282b">Hide apps which are not open</span>
<span class="t" style="left:607.60px;top:408.79px;font-size:26px;letter-spacing:0.505px;color:#29282b;-webkit-text-stroke:0.55px #29282b">Minimized windows have large previews</span>
<span class="t" style="left:608.60px;top:472.79px;font-size:26px;letter-spacing:0.601px;color:#29282b;-webkit-text-stroke:0.55px #29282b">Open application have indicator lights</span>
<span class="t" style="left:607.60px;top:665.19px;font-size:26px;letter-spacing:0.679px;color:#29282b;-webkit-text-stroke:0.55px #29282b">Prevent bouncing when app requests attention</span>
<span class="t" style="left:607.60px;top:729.19px;font-size:26px;letter-spacing:0.585px;color:#29282b;-webkit-text-stroke:0.55px #29282b">Bounce app icons when launching</span>
<span class="t" style="left:607.60px;top:889.19px;font-size:26px;letter-spacing:0.726px;color:#29282b;-webkit-text-stroke:0.55px #29282b">Highlight stack items on mouse-over</span>
<span class="t" style="left:581.80px;top:564.99px;font-size:26px;letter-spacing:0.557px;color:#232225;-webkit-text-stroke:0.55px #232225">Default</span>
<span class="t" style="left:691.40px;top:789.39px;font-size:26px;letter-spacing:0.641px;color:#232225;-webkit-text-stroke:0.55px #232225">Default</span>
<span class="t" style="left:403.20px;top:1356.19px;font-size:26px;letter-spacing:0.274px;color:#232225;-webkit-text-stroke:0.55px #232225">Relaunch Dock</span>
<span class="t" style="left:677.00px;top:1356.19px;font-size:26px;letter-spacing:0.317px;color:#232225;-webkit-text-stroke:0.55px #232225">Reset All</span>
<span class="t" style="left:1383.00px;top:1356.19px;font-size:26px;letter-spacing:0.491px;color:#232225;-webkit-text-stroke:0.55px #232225">Advanced...</span>
</div>
</body>
</html>
